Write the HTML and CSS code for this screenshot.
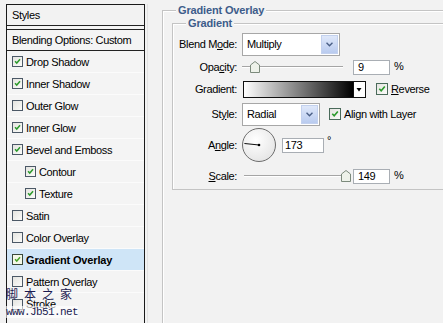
FILE: index.html
```html
<!DOCTYPE html>
<html lang="en">
<head>
<meta charset="UTF-8" />
<title>Layer Style - Gradient Overlay</title>
<link rel="stylesheet" href="styles.css">
</head>
<body>
  <div class="page">
    <aside class="styles-panel">
      <div class="panel-head">Styles</div>
      <div class="panel-blend">Blending Options: Custom</div>
      <ul class="fx-list">
        <li class="fx"><span class="cb on"><svg viewBox="0 0 11 11"><path d="M2.5 5.2 L4.6 7.4 L8.6 2.8"/></svg></span>Drop Shadow</li>
        <li class="fx"><span class="cb on"><svg viewBox="0 0 11 11"><path d="M2.5 5.2 L4.6 7.4 L8.6 2.8"/></svg></span>Inner Shadow</li>
        <li class="fx"><span class="cb"></span>Outer Glow</li>
        <li class="fx"><span class="cb on"><svg viewBox="0 0 11 11"><path d="M2.5 5.2 L4.6 7.4 L8.6 2.8"/></svg></span>Inner Glow</li>
        <li class="fx"><span class="cb on"><svg viewBox="0 0 11 11"><path d="M2.5 5.2 L4.6 7.4 L8.6 2.8"/></svg></span>Bevel and Emboss</li>
        <li class="fx sub"><span class="cb on"><svg viewBox="0 0 11 11"><path d="M2.5 5.2 L4.6 7.4 L8.6 2.8"/></svg></span>Contour</li>
        <li class="fx sub"><span class="cb on"><svg viewBox="0 0 11 11"><path d="M2.5 5.2 L4.6 7.4 L8.6 2.8"/></svg></span>Texture</li>
        <li class="fx"><span class="cb"></span>Satin</li>
        <li class="fx"><span class="cb"></span>Color Overlay</li>
        <li class="fx active"><span class="cb on"><svg viewBox="0 0 11 11"><path d="M2.5 5.2 L4.6 7.4 L8.6 2.8"/></svg></span>Gradient Overlay</li>
        <li class="fx"><span class="cb"></span>Pattern Overlay</li>
        <li class="fx last"><span class="cb"></span>Stroke</li>
      </ul>
    </aside>

    <main class="settings">
      <fieldset class="group outer">
        <legend>Gradient Overlay</legend>
        <fieldset class="group inner">
          <legend>Gradient</legend>
          <div class="form">
            <label class="lbl">Blend M<u>o</u>de:</label>
            <div class="ctl">
              <div class="select blend"><span>Multiply</span><span class="drop"><svg viewBox="0 0 16 20"><path d="M4.5 8 L8 11.5 L11.5 8"/></svg></span></div>
            </div>

            <label class="lbl">Opa<u>c</u>ity:</label>
            <div class="ctl">
              <div class="slider"><span class="thumb" style="left: 8px"><svg viewBox="0 0 10 12"><path d="M0.5 4 L5 0.5 L9.5 4 L9.5 11.5 L0.5 11.5 Z"/></svg></span></div>
              <div class="num">9</div>
              <span class="unit">%</span>
            </div>

            <label class="lbl">Gradient:</label>
            <div class="ctl">
              <div class="swatch"></div>
              <div class="swatch-drop"><svg viewBox="0 0 10 15"><path d="M2.5 6 L7.5 6 L5 9.5 Z"/></svg></div>
              <span class="cb big on"><svg viewBox="0 0 11 11"><path d="M2.5 5.2 L4.6 7.4 L8.6 2.8"/></svg></span>
              <span class="cb-text"><u>R</u>everse</span>
            </div>

            <label class="lbl">St<u>y</u>le:</label>
            <div class="ctl">
              <div class="select style"><span>Radial</span><span class="drop"><svg viewBox="0 0 16 20"><path d="M4.5 8 L8 11.5 L11.5 8"/></svg></span></div>
              <span class="cb big on align"><svg viewBox="0 0 11 11"><path d="M2.5 5.2 L4.6 7.4 L8.6 2.8"/></svg></span>
              <span class="cb-text">Align with Layer</span>
            </div>

            <label class="lbl">A<u>n</u>gle:</label>
            <div class="ctl">
              <div class="dial"><svg viewBox="0 0 34 34"><line x1="17" y1="17" x2="1.5" y2="15.4"/><circle cx="17" cy="17" r="1.4"/></svg></div>
              <div class="num angle">173</div>
              <span class="unit deg">°</span>
            </div>

            <label class="lbl"><u>S</u>cale:</label>
            <div class="ctl">
              <div class="slider scale"><span class="thumb" style="left: 97px"><svg viewBox="0 0 10 12"><path d="M0.5 4 L5 0.5 L9.5 4 L9.5 11.5 L0.5 11.5 Z"/></svg></span></div>
              <div class="num">149</div>
              <span class="unit">%</span>
            </div>
          </div>
        </fieldset>
      </fieldset>
    </main>

    <div class="watermark">
      <div class="wm-cn">脚本之家</div>
      <div class="wm-url">www.Jb51.net</div>
    </div>
  </div>
</body>
</html>
```

FILE: styles.css
```css
/* Base */
* {
  box-sizing: border-box;
}
html, body {
  margin: 0;
  height: 100%;
  overflow: hidden;
}
body {
  font-family: 'Liberation Sans', Arial, sans-serif;
  font-size: 11px;
  letter-spacing: -0.35px;
  color: #000;
  background-color: #f2f2f2;
}
.page {
  position: relative;
  display: flex;
  align-items: stretch;
  padding-top: 4px;
  height: 100%;
}
u {
  text-decoration: underline;
  text-underline-offset: 1px;
}

/* Styles list on the left (runs on below the window) */
.styles-panel {
  flex: none;
  width: 139px;
  margin-left: 6px;
  border: 1px solid #1a1a1a;
  border-bottom: none;
  background-color: #f4f4f4;
  overflow: hidden;
}
.panel-head {
  height: 21px;
  padding-left: 5px;
  line-height: 20px;
  border-bottom: 1px solid #222;
  background-color: #f2f2f2;
}
.panel-blend {
  height: 22px;
  margin-top: 3px;
  padding-left: 5px;
  line-height: 20px;
  border-top: 1px solid #222;
  border-bottom: 1px solid #222;
  background-color: #f4f4f4;
}
.fx-list {
  list-style: none;
  margin: 0;
  padding: 0;
}
.fx {
  display: flex;
  align-items: center;
  height: 22px;
  padding-left: 5px;
  border-bottom: 1px solid #fbfbfb;
}
.fx.last {
  border-bottom: none;
}
.fx.sub {
  padding-left: 18px;
}
.fx.active {
  background-color: #cfe5f7;
  font-weight: 700;
  letter-spacing: -0.15px;
}

/* Checkboxes */
.cb {
  flex: none;
  display: inline-block;
  width: 11px;
  height: 11px;
  margin-right: 3px;
  border: 1px solid #4b5866;
  background: linear-gradient(135deg, #e4e4e0, #fbfbf9);
}
.cb svg {
  display: block;
  width: 9px;
  height: 9px;
}
.cb svg path {
  fill: none;
  stroke: #2c9a2c;
  stroke-width: 1.8;
}
.fx.active .cb {
  border-color: #3a4a3a;
  background: #f4f8e8;
}
.fx.active .cb svg path {
  stroke: #4aa52a;
}
.cb.big {
  width: 12px;
  height: 12px;
  margin-left: 10px;
  border-color: #4a6a5a;
}
.cb.big svg {
  width: 10px;
  height: 10px;
}
.cb.align {
  margin-left: 9px;
}
.cb-text {
  white-space: nowrap;
}

/* Right side settings: the group boxes run past the window edge */
.settings {
  flex: 1;
  min-width: 0;
  margin-left: 2px;
  padding-left: 14px;
  border-left: 1px solid #e2e2e2;
  overflow: hidden;
}
.group {
  margin: 0;
  min-width: 0;
  border: 1px solid #c4c4c4;
  border-right: none;
  box-shadow: inset 1px 1px 0 #fff;
}
.group legend {
  padding: 0 2px;
  line-height: 13px;
  font-weight: 700;
  letter-spacing: -0.15px;
  color: #3d5c8a;
  background-color: #f2f2f2;
}
.group.outer {
  height: 100%;
  padding: 0 0 0 9px;
  border-bottom: none;
}
.group.outer > legend {
  margin-left: 4px;
}
.group.inner {
  padding: 1px 0 0 0;
}
.group.inner > legend {
  margin-left: 13px;
}

/* Form grid */
.form {
  display: grid;
  grid-template-columns: 64px auto;
  grid-template-rows: 26px 20px 24px 26px 36px 26px;
  column-gap: 5px;
  align-items: center;
}
.lbl {
  text-align: right;
  white-space: nowrap;
}
.ctl {
  display: flex;
  align-items: center;
}

/* Select boxes */
.select {
  display: flex;
  align-items: center;
  justify-content: space-between;
  height: 23px;
  padding: 1px 1px 1px 4px;
  border: 1px solid #a7a7a7;
  background-color: #fff;
}
.select.blend {
  width: 98px;
}
.select.style {
  width: 78px;
}
.drop {
  width: 17px;
  height: 19px;
  border: 1px solid #c3d1ee;
  background: linear-gradient(#dfe8fa, #b9cbef);
}
.drop svg {
  display: block;
  width: 15px;
  height: 17px;
}
.drop svg path {
  fill: none;
  stroke: #4a5f86;
  stroke-width: 1.6;
}

/* Sliders */
.slider {
  position: relative;
  width: 101px;
  height: 12px;
}
.slider::before {
  content: "";
  position: absolute;
  left: 0;
  right: 0;
  top: 5px;
  border-top: 1px solid #a5a5a5;
  border-bottom: 1px solid #fff;
}
.slider.scale {
  margin-left: 2px;
  width: 99px;
}
.thumb {
  position: absolute;
  top: 0;
  width: 10px;
  height: 12px;
}
.thumb svg {
  display: block;
  width: 10px;
  height: 12px;
}
.thumb svg path {
  fill: #eef2ea;
  stroke: #7c8a7c;
  stroke-width: 1;
}

/* Number inputs */
.num {
  width: 37px;
  height: 15px;
  margin-left: 10px;
  padding-left: 4px;
  line-height: 13px;
  border: 1px solid #a9aeb4;
  background-color: #fff;
}
.num.angle {
  width: 42px;
  margin-left: 6px;
  padding-left: 2px;
}
.unit {
  align-self: flex-start;
  margin-left: 4px;
  margin-top: 0;
}
.unit.deg {
  margin-left: 3px;
  margin-top: 6px;
}

/* Gradient swatch */
.swatch {
  width: 111px;
  height: 17px;
  margin-left: 1px;
  border: 1px solid #111;
  background: linear-gradient(to right, #fff 0%, #999 40%, #000 100%);
}
.swatch-drop {
  width: 12px;
  height: 17px;
  border: 1px solid #111;
  border-left: none;
  background-color: #fff;
}
.swatch-drop svg {
  display: block;
  width: 10px;
  height: 15px;
}
.swatch-drop svg path {
  fill: #000;
}

/* Angle dial */
.dial {
  width: 34px;
  height: 34px;
  border: 1px solid #6d6d6d;
  border-radius: 50%;
  background: radial-gradient(circle at 40% 35%, #ffffff, #e8e8e8 70%, #d8d8d8);
}
.dial svg {
  display: block;
  width: 32px;
  height: 32px;
}
.dial svg line {
  stroke: #000;
  stroke-width: 1;
}
.dial svg circle {
  fill: #000;
}

/* Site watermark over the list */
.watermark {
  position: absolute;
  left: 6px;
  top: 287px;
  color: #1a1a50;
}
.wm-cn {
  font-family: 'Noto Sans CJK SC', sans-serif;
  font-size: 12px;
  line-height: 14px;
  letter-spacing: 6px;
}
.wm-url {
  margin-top: 5px;
  font-family: 'Liberation Mono', 'Courier New', monospace;
  font-size: 11px;
  line-height: 12px;
  letter-spacing: -0.6px;
  background-color: rgba(255, 255, 255, 0.6);
}
```
